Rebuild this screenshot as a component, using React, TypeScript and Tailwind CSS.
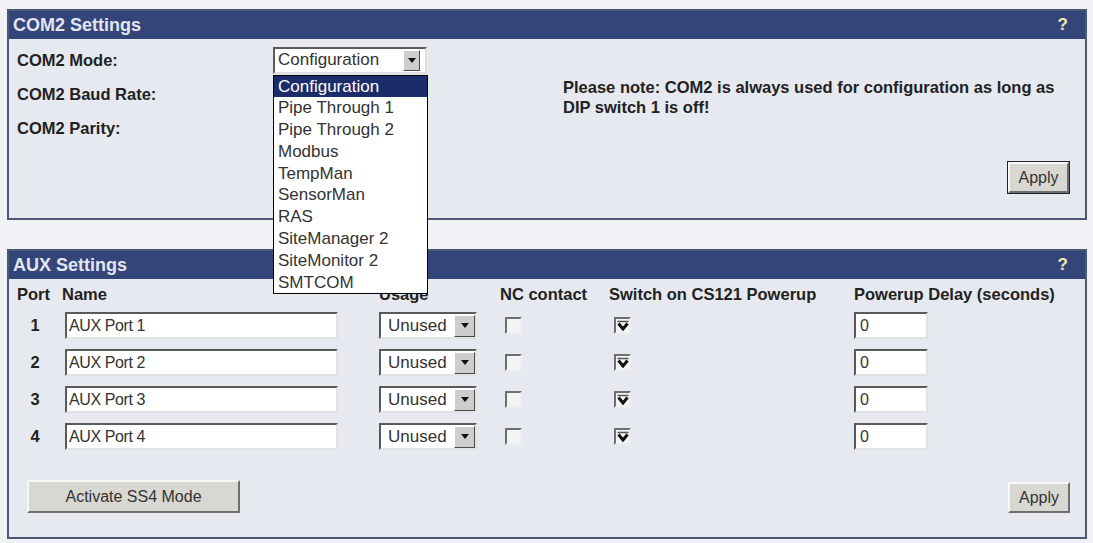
import React from "react";

const modes = [
    "Configuration",
    "Pipe Through 1",
    "Pipe Through 2",
    "Modbus",
    "TempMan",
    "SensorMan",
    "RAS",
    "SiteManager 2",
    "SiteMonitor 2",
    "SMTCOM",
];

const ports = [1, 2, 3, 4];

const Arrow = ({ small }: { small?: boolean }) => (
    <span
        className={
            "flex items-center justify-center border border-t-white border-l-white border-b-[#4a4a4a] border-r-[#4a4a4a] bg-[#cdcdcd] " +
            (small ? "h-[21px] w-[17px]" : "h-[22px] w-[21px]")
        }
    >
        <svg width="8" height="5" viewBox="0 0 8 5">
            <path d="M0 0h8L4 5z" fill="#111" />
        </svg>
    </span>
);

const Check = ({ checked }: { checked?: boolean }) => (
    <span className="flex h-[17px] w-[17px] items-center justify-center border-2 border-t-[#6e6e6e] border-l-[#6e6e6e] border-b-[#eeeeee] border-r-[#eeeeee] bg-[#f4f4f4]">
        {checked && (
            <svg width="12" height="11" viewBox="0 0 12 11">
                <path d="M0.5 1.5h11" stroke="#555" strokeWidth="1.5" />
                <path d="M1.5 3.5L6 9L10.5 3.5" stroke="#111" strokeWidth="3" fill="none" />
            </svg>
        )}
    </span>
);

const Button = ({ label, className, outlined }: { label: string; className: string; outlined?: boolean }) => (
    <button
        className={
            "flex items-center justify-center bg-[#d9d7d1] text-[16px] text-[#333] border-2 border-t-[#f8f8f8] border-l-[#f8f8f8] border-b-[#6e6e6e] border-r-[#6e6e6e] " +
            (outlined ? "outline outline-[1.5px] outline-[#222] " : "") +
            className
        }
    >
        {label}
    </button>
);

const PanelHeader = ({ title }: { title: string }) => (
    <div className="flex h-[28px] items-center justify-between bg-[#34457a] pl-[4px] pr-[17px]">
        <span className="text-[18px] font-bold text-[#e3e6ef]">{title}</span>
        <span className="text-[17px] font-bold text-[#ecebb4]">?</span>
    </div>
);

export default function App() {
    return (
        <div className="min-h-[543px] bg-[#f0f2f5] pl-[7px] pt-[9px] font-['Liberation_Sans',Arial,sans-serif] text-[#222]">
            {/* COM2 */}
            <div className="w-[1080px] border-2 border-[#4d5874]">
                <PanelHeader title="COM2 Settings" />
                <div className="flex h-[179px] flex-col bg-[#e6e9ef]">
                    <div className="flex">
                        <div className="flex w-[554px] flex-col pl-[8px] pt-[4px] text-[16.5px] font-bold">
                            <div className="flex h-[34px] items-center">
                                <span className="w-[256px]">COM2 Mode:</span>
                                <div className="relative">
                                    <div className="flex h-[27px] w-[154px] items-center justify-between border-2 border-t-[#5a5a5a] border-l-[#5a5a5a] border-b-[#dedede] border-r-[#dedede] bg-white pl-[3px] pr-[5px]">
                                        <span className="text-[17px] font-normal text-[#333]">Configuration</span>
                                        <Arrow small />
                                    </div>
                                    <ul className="absolute left-0 top-[28px] z-10 w-[155px] border border-black bg-white text-[17px] font-normal text-[#333]">
                                        {modes.map((m, i) => (
                                            <li
                                                key={m}
                                                className={
                                                    "h-[21.8px] pl-[4px] leading-[21.8px] " +
                                                    (i === 0 ? "bg-[#1b2c6b] text-white" : "")
                                                }
                                            >
                                                {m}
                                            </li>
                                        ))}
                                    </ul>
                                </div>
                            </div>
                            <div className="flex h-[34px] items-center">COM2 Baud Rate:</div>
                            <div className="flex h-[34px] items-center">COM2 Parity:</div>
                        </div>
                        <p className="whitespace-nowrap pt-[38px] text-[16.5px] font-bold leading-[20px]">
                            Please note: COM2 is always used for configuration as long as
                            <br />
                            DIP switch 1 is off!
                        </p>
                    </div>
                    <div className="mt-auto flex justify-end pb-[25px] pr-[16px]">
                        <Button label="Apply" outlined className="h-[31px] w-[61px]" />
                    </div>
                </div>
            </div>

            {/* AUX */}
            <div className="mt-[29px] w-[1080px] border-2 border-[#4d5874]">
                <PanelHeader title="AUX Settings" />
                <div className="bg-[#e6e9ef] pb-[24px] pl-[8px]">
                    <div className="grid grid-cols-[45px_317px_121px_109px_245px_1fr] text-[16.5px]">
                        {["Port", "Name", "Usage", "NC contact", "Switch on CS121 Powerup", "Powerup Delay (seconds)"].map(
                            (h) => (
                                <div key={h} className="flex h-[28px] items-center whitespace-nowrap pt-[3px] font-bold">
                                    {h}
                                </div>
                            )
                        )}
                        {ports.map((p) => (
                            <React.Fragment key={p}>
                                <div className="flex h-[37px] w-[36px] items-center justify-center font-bold">{p}</div>
                                <div className="flex h-[37px] items-center">
                                    <div className="ml-[3px] flex h-[27px] w-[273px] items-center border-2 border-t-[#5a5a5a] border-l-[#5a5a5a] border-b-[#e2e2e2] border-r-[#e2e2e2] bg-white pl-[2px] text-[16px] tracking-tight text-[#333]">
                                        AUX Port {p}
                                    </div>
                                </div>
                                <div className="flex h-[37px] items-center">
                                    <div className="flex h-[27px] w-[98px] items-center justify-between border-2 border-t-[#5a5a5a] border-l-[#5a5a5a] border-b-[#e2e2e2] border-r-[#e2e2e2] bg-white pl-[7px]">
                                        <span className="text-[17px] text-[#333]">Unused</span>
                                        <Arrow />
                                    </div>
                                </div>
                                <div className="flex h-[37px] items-center pl-[5px]">
                                    <Check />
                                </div>
                                <div className="flex h-[37px] items-center pl-[5px]">
                                    <Check checked />
                                </div>
                                <div className="flex h-[37px] items-center">
                                    <div className="flex h-[27px] w-[74px] items-center border-2 border-t-[#5a5a5a] border-l-[#5a5a5a] border-b-[#e2e2e2] border-r-[#e2e2e2] bg-white pl-[4px] text-[16px] text-[#333]">
                                        0
                                    </div>
                                </div>
                            </React.Fragment>
                        ))}
                    </div>
                    <div className="mt-[25px] flex items-end justify-between pr-[15px]">
                        <Button label="Activate SS4 Mode" className="ml-[10px] h-[33px] w-[213px]" />
                        <Button label="Apply" className="h-[31px] w-[62px]" />
                    </div>
                </div>
            </div>
        </div>
    );
}
